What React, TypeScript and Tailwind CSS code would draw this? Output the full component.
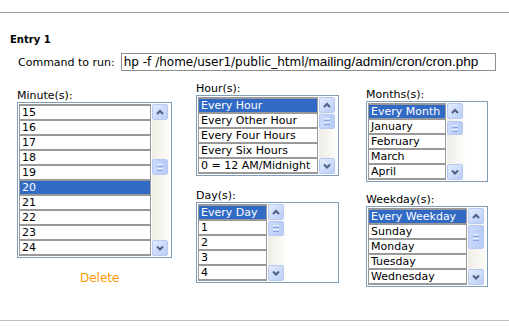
import React from "react";

const FONT = { fontFamily: '"DejaVu Sans", Verdana, sans-serif' };

function Arrow({ up }: { up: boolean }) {
  return (
    <svg width="8" height="6" viewBox="0 0 8 6" className="block">
      <path
        d={up ? "M1 5 L4 2 L7 5" : "M1 1.5 L4 4.5 L7 1.5"}
        fill="none"
        stroke="#4d6185"
        strokeWidth="2"
      />
    </svg>
  );
}

function Btn({ up }: { up: boolean }) {
  return (
    <div className="h-[16px] w-[16px] shrink-0 rounded-[2px] border border-[#b7c9f3] bg-linear-to-br from-[#e4ecfd] to-[#b9cdf6] flex items-center justify-center">
      <Arrow up={up} />
    </div>
  );
}

function Thumb({ h }: { h: string }) {
  return (
    <div
      className={`${h} w-[16px] shrink-0 rounded-[2px] border border-[#b7c9f3] bg-linear-to-r from-[#cbdafc] to-[#b7cbf6] flex flex-col items-center justify-center gap-[1px]`}
    >
      <div className="h-px w-[6px] bg-[#eef3fe]" />
      <div className="h-px w-[6px] bg-[#8ca7e0]" />
      <div className="h-px w-[6px] bg-[#eef3fe]" />
      <div className="h-px w-[6px] bg-[#8ca7e0]" />
    </div>
  );
}

function ListBox({
  items,
  selected,
  listW,
  spacer,
  thumbH,
}: {
  items: string[];
  selected: number;
  listW: string;
  spacer: string;
  thumbH: string;
}) {
  return (
    <div className="flex gap-[1px] border border-[#7f9db9] bg-white p-[1px]">
      <div className={`${listW} flex flex-col border-x border-b-2 border-[#999999]`}>
        {items.map((it, i) => (
          <div
            key={i}
            className={`h-[15px] border-t-2 border-[#999999] pl-[2px] text-[11px] leading-[13px] whitespace-nowrap overflow-hidden ${
              i === selected ? "bg-[#316ac5] text-white" : "bg-white text-black"
            }`}
          >
            {it}
          </div>
        ))}
      </div>
      <div className="w-[18px] flex flex-col bg-linear-to-r from-[#eeede5] to-[#fdfdfb]">
        <Btn up />
        <div className={spacer} />
        <Thumb h={thumbH} />
        <div className="flex-1" />
        <Btn up={false} />
      </div>
    </div>
  );
}

export default function App() {
  return (
    <div className="w-[509px] h-[334px] bg-white flex flex-col text-black" style={FONT}>
      <div className="h-[12px]" />
      <div className="h-px bg-[#a0a0a0]" />
      <div className="ml-[10px] mt-[21px] text-[10px] font-bold leading-[12px] h-[12px]">Entry 1</div>
      <div className="mt-[7px] flex items-center pl-[18px] h-[18px]">
        <span className="text-[11px] leading-[13px]">Command to run:</span>
        <div className="ml-[6px] w-[375px] h-[18px] border border-[#8f8f8f] flex items-center pl-[2px] overflow-hidden whitespace-nowrap">
          <span className="text-[12px]">hp -f /home/user1/public_html/</span>
          <span className="text-[13.5px]" style={{ fontFamily: '"Liberation Sans", Arial, sans-serif' }}>
            mailing/admin/cron/cron.php
          </span>
        </div>
      </div>
      <div className="flex items-start pl-[17px]">
        <div className="mt-[19px] flex flex-col w-[155px]">
          <div className="text-[11px] leading-[12px] h-[12px]">Minute(s):</div>
          <ListBox
            items={["15", "16", "17", "18", "19", "20", "21", "22", "23", "24"]}
            selected={5}
            listW="w-[132px]"
            spacer="h-[39px]"
            thumbH="h-[16px]"
          />
          <div className="mt-[13px] ml-[63px] text-[12px] leading-[14px] text-[#ff9900]">Delete</div>
        </div>
        <div className="ml-[24px] mt-[12px] flex flex-col">
          <div className="text-[11px] leading-[12px] h-[12px]">Hour(s):</div>
          <ListBox
            items={["Every Hour", "Every Other Hour", "Every Four Hours", "Every Six Hours", "0 = 12 AM/Midnight"]}
            selected={0}
            listW="w-[120px]"
            spacer="h-[1px]"
            thumbH="h-[15px]"
          />
          <div className="mt-[14px] text-[11px] leading-[12px] h-[12px]">Day(s):</div>
          <ListBox
            items={["Every Day", "1", "2", "3", "4"]}
            selected={0}
            listW="w-[69px]"
            spacer="h-[1px]"
            thumbH="h-[15px]"
          />
        </div>
        <div className="ml-[27px] mt-[18px] flex flex-col">
          <div className="text-[11px] leading-[12px] h-[12px]">Months(s):</div>
          <ListBox
            items={["Every Month", "January", "February", "March", "April"]}
            selected={0}
            listW="w-[78px]"
            spacer="h-[2px]"
            thumbH="h-[14px]"
          />
          <div className="mt-[12px] text-[11px] leading-[12px] h-[12px]">Weekday(s):</div>
          <ListBox
            items={["Every Weekday", "Sunday", "Monday", "Tuesday", "Wednesday"]}
            selected={0}
            listW="w-[99px]"
            spacer="h-[1px]"
            thumbH="h-[24px]"
          />
        </div>
      </div>
      <div className="mt-auto h-px bg-[#c0c0c0]" />
      <div className="h-[13px]" />
    </div>
  );
}
